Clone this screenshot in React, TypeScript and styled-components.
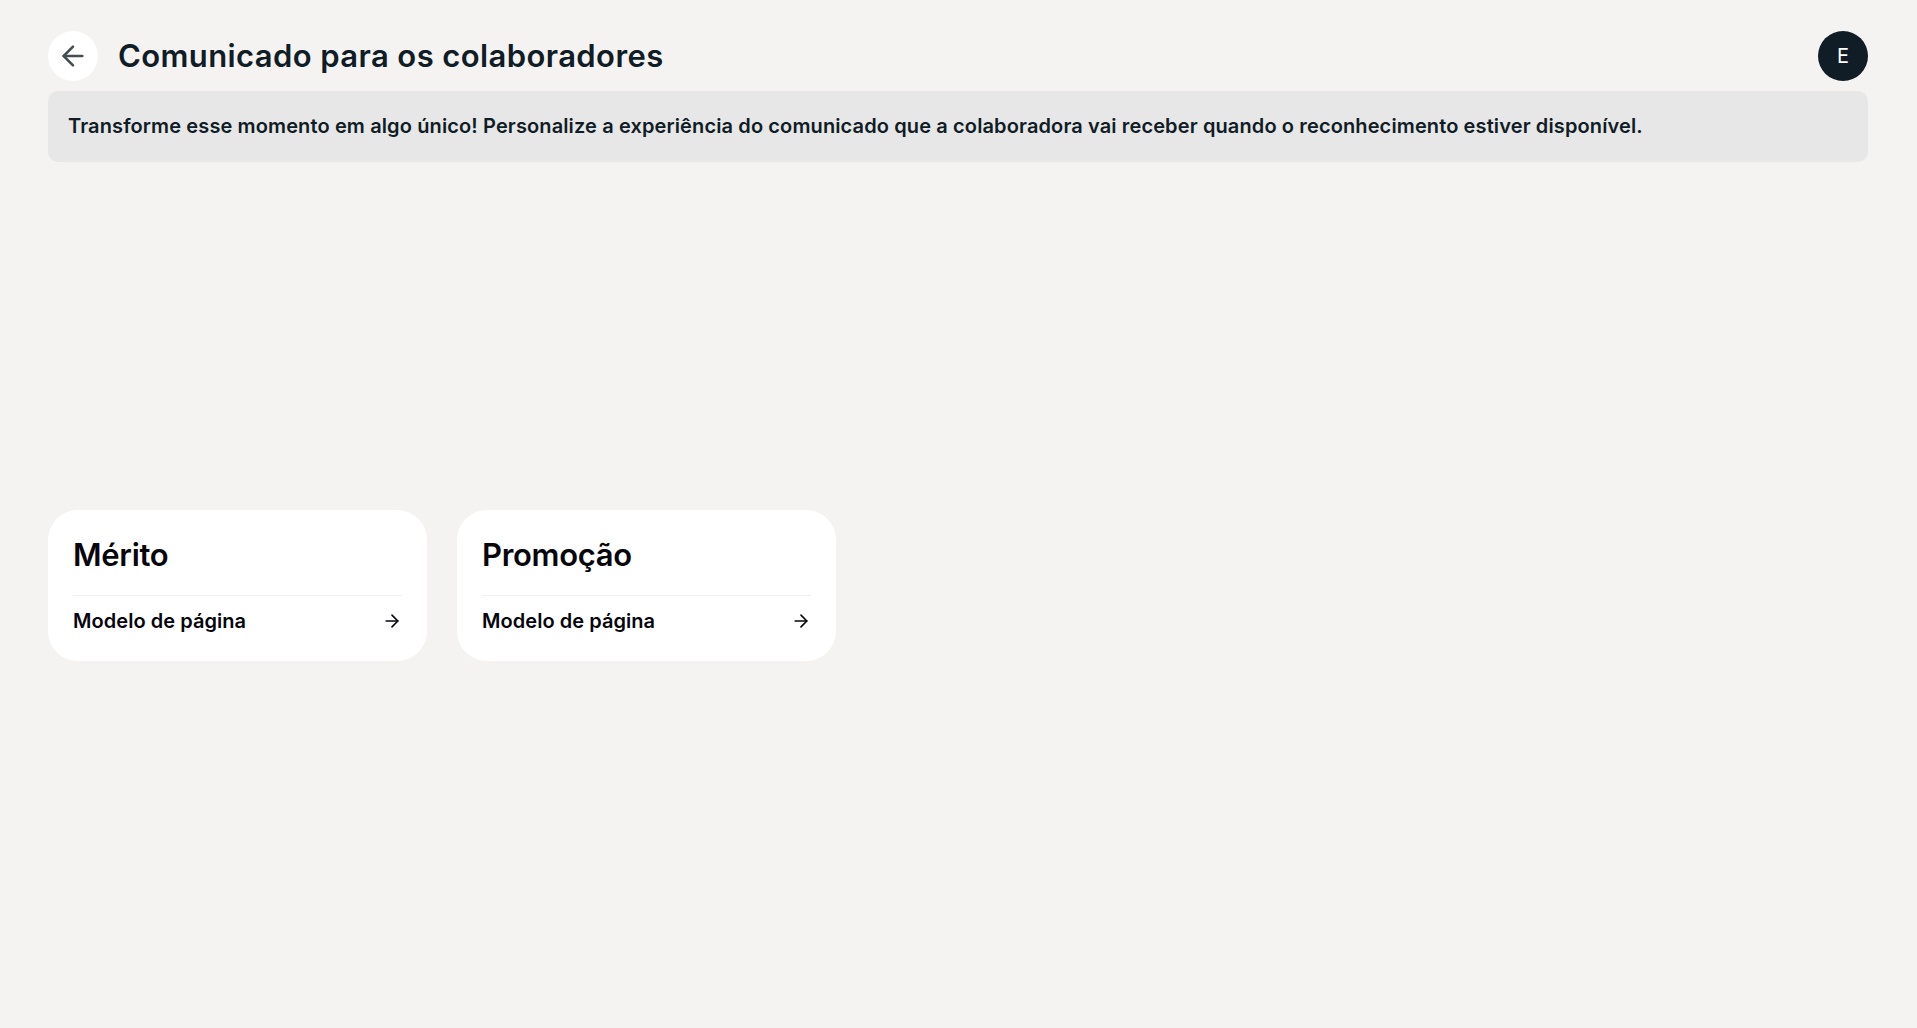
import React from "react";
import styled, { createGlobalStyle } from "styled-components";
import { ArrowLeft, ArrowRight } from "lucide-react";

const GlobalStyle = createGlobalStyle`
  html, body {
    margin: 0;
    padding: 0;
    background: #f4f3f1;
  }
  body {
    font-family: Inter, "Liberation Sans", sans-serif;
    color: #101c26;
  }
`;

const Page = styled.div`
  min-height: 1028px;
  box-sizing: border-box;
  padding: 31px 49px 0 48px;
`;

const Header = styled.header`
  display: flex;
  align-items: center;
  justify-content: space-between;
  height: 50px;
`;

const TitleGroup = styled.div`
  display: flex;
  align-items: center;
  gap: 20px;
`;

const BackButton = styled.button`
  display: flex;
  align-items: center;
  justify-content: center;
  width: 50px;
  height: 50px;
  padding: 0;
  border: 0;
  border-radius: 50%;
  background: #fff;
  color: #454c54;
`;

const Title = styled.h1`
  margin: 0;
  font-size: 31px;
  line-height: 36px;
  font-weight: 600;
  letter-spacing: 0.4px;
  color: #101c26;
`;

const Avatar = styled.div`
  display: flex;
  align-items: center;
  justify-content: center;
  width: 50px;
  height: 50px;
  border-radius: 50%;
  background: #101c26;
  color: #fff;
  font-size: 20px;
`;

const Banner = styled.p`
  box-sizing: border-box;
  margin: 10px 0 0;
  height: 71px;
  padding: 0 20px 2px;
  display: flex;
  align-items: center;
  border-radius: 10px;
  background: #e7e7e7;
  font-size: 20px;
  font-weight: 600;
  letter-spacing: 0.12px;
  color: #101c26;
`;

const CardRow = styled.section`
  display: flex;
  gap: 30px;
  margin-top: 348px;
`;

const Card = styled.article`
  box-sizing: border-box;
  width: 379px;
  height: 151px;
  padding: 27px 25px 0;
  border-radius: 30px;
  background: #fff;
  color: #08060d;
`;

const CardTitle = styled.h2`
  margin: 0;
  padding-bottom: 22px;
  border-bottom: 1px solid #f1f1f1;
  font-size: 31px;
  line-height: 36px;
  font-weight: 600;
  letter-spacing: -0.3px;
`;

const CardLink = styled.a`
  display: flex;
  align-items: center;
  justify-content: space-between;
  margin-top: 12px;
  font-size: 20px;
  line-height: 26px;
  font-weight: 600;
  letter-spacing: 0.05px;
`;

const cards = ["Mérito", "Promoção"];

export default function App() {
  return (
    <Page>
      <GlobalStyle />
      <Header>
        <TitleGroup>
          <BackButton aria-label="Voltar">
            <ArrowLeft size={32} strokeWidth={1.9} />
          </BackButton>
          <Title>Comunicado para os colaboradores</Title>
        </TitleGroup>
        <Avatar>E</Avatar>
      </Header>
      <Banner>
        Transforme esse momento em algo único! Personalize a experiência do comunicado que a
        colaboradora vai receber quando o reconhecimento estiver disponível.
      </Banner>
      <CardRow>
        {cards.map((name) => (
          <Card key={name}>
            <CardTitle>{name}</CardTitle>
            <CardLink>
              Modelo de página
              <ArrowRight size={20} strokeWidth={2} />
            </CardLink>
          </Card>
        ))}
      </CardRow>
    </Page>
  );
}
